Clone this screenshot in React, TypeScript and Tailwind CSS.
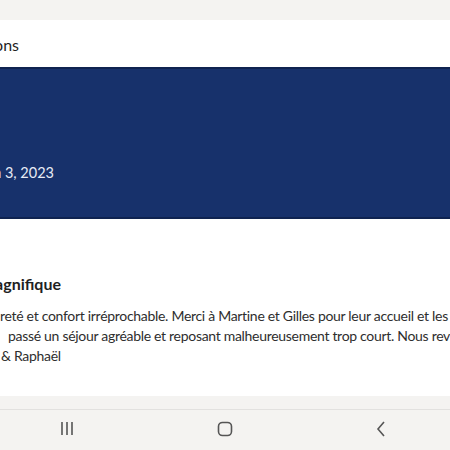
export default function App() {
  const font = { fontFamily: 'Lato, "Open Sans", sans-serif' };
  return (
    <div className="w-[450px] h-[450px] overflow-hidden bg-white flex flex-col text-[#2b2b2b]" style={font}>
      <div className="h-[20px] bg-[#f4f3f1]" />
      <div className="h-[47px] flex items-center pt-[2px]">
        <div className="w-[19px] flex justify-end whitespace-nowrap text-[16px] text-[#1f1f1f]">Évaluations</div>
      </div>
      <div className="h-[152px] bg-[#17316b] border-t-2 border-t-[#0f2350] border-b-2 border-b-[#0f2350] flex flex-col justify-end pb-[33px]">
        <div className="w-[54px] flex justify-end whitespace-nowrap text-[14.5px] text-[#e6ebf5]">Séjour en juin · Jun 3, 2023</div>
      </div>
      <div className="flex-1 flex flex-col pt-[55px]">
        <div className="w-[61px] flex justify-end whitespace-nowrap text-[16px] font-bold text-[#1f1f1f] leading-[20px]">Magnifique</div>
        <div className="mt-[12px] flex flex-col text-[14px] tracking-[-0.3px] leading-[20px] text-[#2e2e2e]">
          <div className="w-[1200px] whitespace-nowrap">reté et confort irréprochable. Merci à Martine et Gilles pour leur accueil et les conseils avisés.</div>
          <div className="pl-[8px] whitespace-nowrap">passé un séjour agréable et reposant malheureusement trop court. Nous reviendrons !</div>
          <div className="pl-[1px] whitespace-nowrap">&amp; Raphaël</div>
        </div>
      </div>
      <div className="h-[54px] bg-[#f4f3f1] flex flex-col">
        <div className="h-[14px] border-b border-[#e2e1df]" />
        <div className="flex-1 flex items-center justify-around pb-[2px]">
          <svg width="24" height="24" viewBox="0 0 24 24" className="translate-x-[-8px]">
            <path d="M7 5v13M12 5v13M17 5v13" stroke="#555" strokeWidth="1.6" />
          </svg>
          <svg width="24" height="24" viewBox="0 0 24 24">
            <rect x="5.5" y="5.5" width="13" height="13" rx="4" fill="none" stroke="#555" strokeWidth="1.6" />
          </svg>
          <svg width="24" height="24" viewBox="0 0 24 24" className="translate-x-[6px]">
            <path d="M15 5l-6 7 6 7" fill="none" stroke="#555" strokeWidth="1.6" />
          </svg>
        </div>
      </div>
    </div>
  );
}
